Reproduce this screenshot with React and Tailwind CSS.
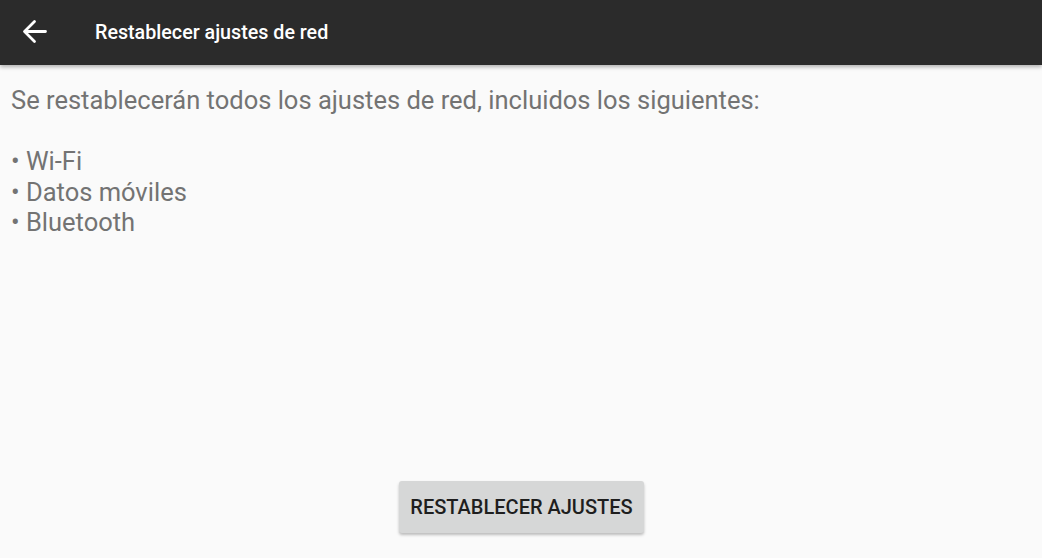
import React from "react";

export default function App() {
  return (
    <div className="w-[1042px] h-[558px] bg-[#fafafa] flex flex-col overflow-hidden" style={{ fontFamily: "Roboto, 'Noto Sans', sans-serif" }}>
      <div className="h-[65px] bg-[#2b2b2b] flex items-center shrink-0 shadow-[0_2px_4px_rgba(0,0,0,0.3)] relative z-10">
        <div className="w-[95px] pl-[22px] flex items-center">
          <svg width="25" height="25" viewBox="0 0 25 25" className="mt-[-3px]">
            <path d="M23.5 12.5H3 M12.5 2.5L2.5 12.5L12.5 22.5" fill="none" stroke="#ffffff" strokeWidth="2.8" strokeLinecap="round" strokeLinejoin="round" />
          </svg>
        </div>
        <div className="text-white text-[19.7px] font-medium mt-[1px]">Restablecer ajustes de red</div>
      </div>
      <div className="flex-1 flex flex-col">
        <div className="pl-[11px] pt-[20px] text-[25.5px] leading-[30.5px] text-[#737373]">
          <div>Se restablecerán todos los ajustes de red, incluidos los siguientes:</div>
          <div>&nbsp;</div>
          <div>• Wi-Fi</div>
          <div>• Datos móviles</div>
          <div>• Bluetooth</div>
        </div>
        <div className="flex-1" />
        <div className="flex justify-center pb-[25px]">
          <button className="w-[245px] h-[52px] bg-[#d6d7d7] rounded-[3px] shadow-[0_2px_3px_rgba(0,0,0,0.25)] text-[20px] font-medium text-[#1e1e1e] ml-[1px]">
            RESTABLECER AJUSTES
          </button>
        </div>
      </div>
    </div>
  );
}
